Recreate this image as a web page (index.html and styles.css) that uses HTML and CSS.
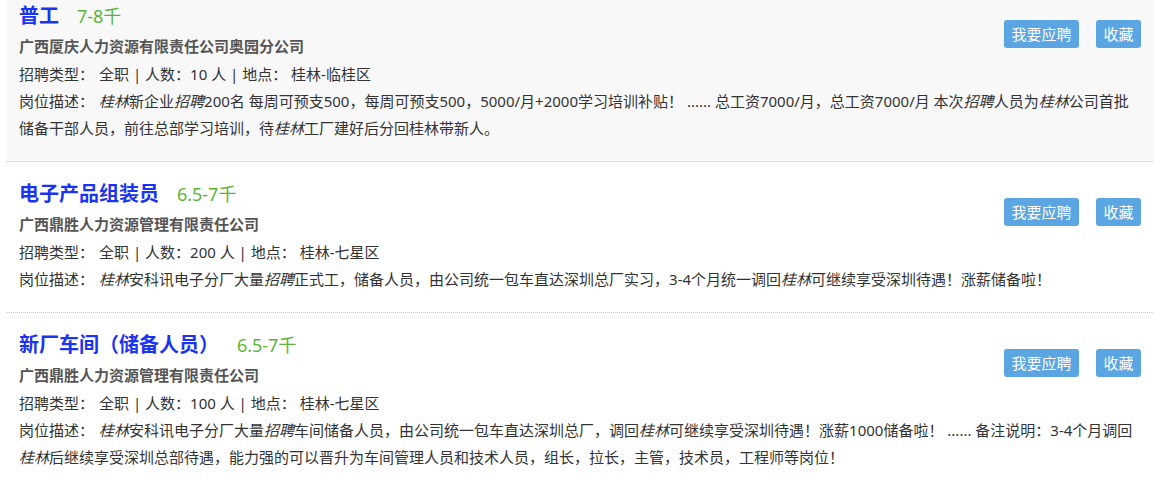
FILE: index.html
```html
<!DOCTYPE html>
<html lang="zh-CN">
<head>
  <meta charset="UTF-8" />
  <meta name="viewport" content="width=device-width, initial-scale=1.0" />
  <title>招聘信息</title>
  <link rel="stylesheet" href="styles.css">
</head>
<body>
  <ul class="job-list">
    <li class="job-item active">
      <div class="job-actions">
        <button class="btn">我要应聘</button>
        <button class="btn">收藏</button>
      </div>
      <div class="job-title">
        <a href="#">普工</a>
        <span class="salary">7-8千</span>
      </div>
      <div class="company">广西厦庆人力资源有限责任公司奥园分公司</div>
      <div class="meta"><span class="label">招聘类型：</span>全职 | 人数：10 人 | 地点：&nbsp;桂林-临桂区</div>
      <div class="desc"><span class="label">岗位描述：</span><em>桂林</em>新企业<em>招聘</em>200名 每周可预支500，每周可预支500，5000/月+2000学习培训补贴！ ...... 总工资7000/月，总工资7000/月 本次<em>招聘</em>人员为<em>桂林</em>公司首批储备干部人员，前往总部学习培训，待<em>桂林</em>工厂建好后分回桂林带新人。</div>
    </li>
    <li class="job-item">
      <div class="job-actions">
        <button class="btn">我要应聘</button>
        <button class="btn">收藏</button>
      </div>
      <div class="job-title">
        <a href="#">电子产品组装员</a>
        <span class="salary">6.5-7千</span>
      </div>
      <div class="company">广西鼎胜人力资源管理有限责任公司</div>
      <div class="meta"><span class="label">招聘类型：</span>全职 | 人数：200 人 | 地点：&nbsp;桂林-七星区</div>
      <div class="desc"><span class="label">岗位描述：</span><em>桂林</em>安科讯电子分厂大量<em>招聘</em>正式工，储备人员，由公司统一包车直达深圳总厂实习，3-4个月统一调回<em>桂林</em>可继续享受深圳待遇！涨薪储备啦！</div>
    </li>
    <li class="job-item">
      <div class="job-actions">
        <button class="btn">我要应聘</button>
        <button class="btn">收藏</button>
      </div>
      <div class="job-title">
        <a href="#">新厂车间（储备人员）</a>
        <span class="salary">6.5-7千</span>
      </div>
      <div class="company">广西鼎胜人力资源管理有限责任公司</div>
      <div class="meta"><span class="label">招聘类型：</span>全职 | 人数：100 人 | 地点：&nbsp;桂林-七星区</div>
      <div class="desc"><span class="label">岗位描述：</span><em>桂林</em>安科讯电子分厂大量<em>招聘</em>车间储备人员，由公司统一包车直达深圳总厂，调回<em>桂林</em>可继续享受深圳待遇！涨薪1000储备啦！ ...... 备注说明：3-4个月调回<em>桂林</em>后继续享受深圳总部待遇，能力强的可以晋升为车间管理人员和技术人员，组长，拉长，主管，技术员，工程师等岗位！</div>
    </li>
  </ul>
</body>
</html>
```

FILE: styles.css
```css
body {
  margin: 0;
  font-family: "Noto Sans", "Noto Sans CJK SC", sans-serif;
  font-size: 15px;
  color: #333;
  background: #fff;
  overflow: hidden;
}
.job-list {
  list-style: none;
  margin: -16px 0 0 7px;
  padding: 0;
}
.job-item {
  padding: 16px 13px 19px 12px;
  border-bottom: 1px dotted #c8c8c8;
}
.job-item.active {
  background-color: #f8f8f8;
}
.job-actions {
  float: right;
  margin-top: 20px;
  display: flex;
  gap: 17px;
}
.btn {
  height: 28px;
  padding: 0 7.5px;
  border: none;
  border-radius: 3px;
  background-color: #5ba5e2;
  color: #fff;
  font-family: inherit;
  font-size: 15px;
  line-height: 28px;
  cursor: pointer;
}
.job-title {
  height: 32px;
  line-height: 32px;
}
.job-title a {
  color: #1b33f2;
  font-size: 20px;
  font-weight: bold;
  text-decoration: none;
}
.salary {
  margin-left: 14px;
  color: #5db538;
  font-size: 18px;
}
.company {
  line-height: 28px;
  font-weight: bold;
  color: #555;
}
.meta {
  line-height: 28px;
}
.desc {
  line-height: 27px;
}
.label {
  margin-right: 5px;
}
.desc em {
  font-style: italic;
}
```
